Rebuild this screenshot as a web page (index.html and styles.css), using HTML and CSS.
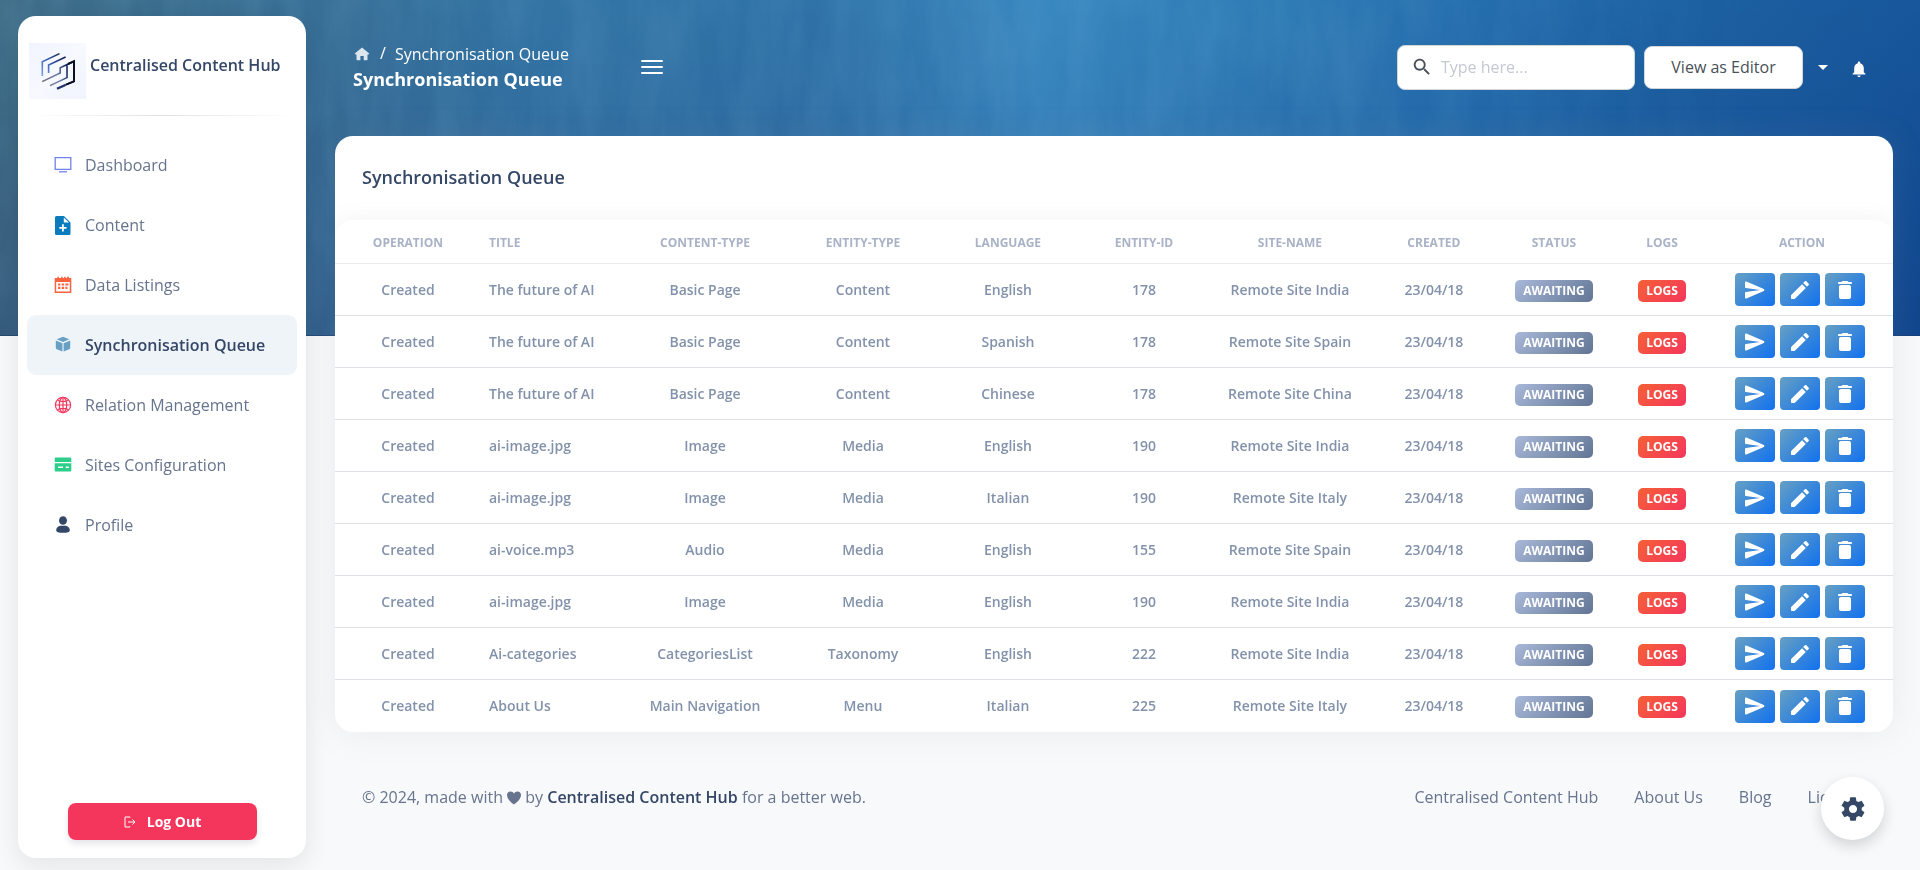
FILE: index.html
```html
<!DOCTYPE html>
<html lang="en">
<head>
<meta charset="utf-8">
<title>Synchronisation Queue</title>
<link rel="stylesheet" href="styles.css">
</head>
<body>
<svg class="sprite" aria-hidden="true">
  <symbol id="send" viewBox="0 0 24 24"><path d="M3.4 20.4l17.45-7.48c.81-.35.81-1.49 0-1.84L3.4 3.6c-.66-.29-1.39.2-1.39.91L2 9.12c0 .5.37.93.87.99L17 12 2.87 13.88c-.5.07-.87.5-.87 1l.01 4.61c0 .71.73 1.2 1.39.91z"/></symbol>
  <symbol id="edit" viewBox="0 0 24 24"><path d="M3 17.46v3.04c0 .28.22.5.5.5h3.04c.13 0 .26-.05.35-.15L17.81 9.94l-3.75-3.75L3.15 17.1c-.1.1-.15.22-.15.36zM20.71 7.04c.39-.39.39-1.02 0-1.41l-2.34-2.34c-.39-.39-1.02-.39-1.41 0l-1.83 1.83 3.75 3.75 1.83-1.83z"/></symbol>
  <symbol id="trash" viewBox="0 0 24 24"><path d="M6 19c0 1.1.9 2 2 2h8c1.1 0 2-.9 2-2V9c0-1.1-.9-2-2-2H8c-1.1 0-2 .9-2 2v10zM18 4h-2.5l-.71-.71c-.18-.18-.44-.29-.7-.29H9.91c-.26 0-.52.11-.7.29L8.5 4H6c-.55 0-1 .45-1 1s.45 1 1 1h12c.55 0 1-.45 1-1s-.45-1-1-1z"/></symbol>
</svg>

<div class="banner">
  <svg class="banner-texture" aria-hidden="true">
    <filter id="streaks" x="0" y="0" width="100%" height="100%"><feTurbulence type="fractalNoise" baseFrequency="0.03 0.008" numOctaves="4" seed="8"/><feColorMatrix values="0 0 0 0 0.3  0 0 0 0 0.62  0 0 0 0 0.82  1.6 0 0 0 -0.5"/></filter>
    <rect width="100%" height="100%" filter="url(#streaks)"/>
  </svg>
</div>

<aside class="sidebar">
  <div class="brand">
    <svg class="brand-logo" viewBox="0 0 57 56" fill="none" stroke-width="1.6" aria-hidden="true">
      <defs>
        <linearGradient id="lg1" gradientUnits="userSpaceOnUse" x1="12" y1="32" x2="36" y2="12"><stop offset="0" stop-color="#7da1e6"/><stop offset=".45" stop-color="#3c5fb5"/><stop offset="1" stop-color="#101a3c"/></linearGradient>
        <linearGradient id="lg2" gradientUnits="userSpaceOnUse" x1="13" y1="38" x2="45" y2="30"><stop offset="0" stop-color="#6d7076"/><stop offset=".5" stop-color="#7180a8"/><stop offset=".8" stop-color="#1c2f70"/><stop offset="1" stop-color="#05070f"/></linearGradient>
        <linearGradient id="lg3" x1="0" y1="0" x2="1" y2="1"><stop offset="0" stop-color="#f0f4ff"/><stop offset=".5" stop-color="#f7f9ff"/><stop offset="1" stop-color="#f1f3fe"/></linearGradient>
      </defs>
      <rect width="57" height="56" fill="url(#lg3)"/>
      <path stroke="url(#lg1)" d="M30.5 10.6 13.3 18.7V33M36.6 14 19.6 22v8"/>
      <path stroke="url(#lg2)" d="M13.2 38.6 31.2 30v-5.3L45 18.3v20L28 45.6M21 42.6l17-8V22"/>
      <path stroke="#0b1020" stroke-width="2" d="M39 21l6-2.7v20l-8 3.4"/>
      <path stroke="#23356d" stroke-width="2.2" d="M36.5 42 28 45.7"/>
    </svg>
    <a class="brand-name" href="#">Centralised Content Hub</a>
  </div>
  <hr class="brand-rule">
  <nav class="menu">
    <a class="menu-item" href="#"><svg class="menu-icon" viewBox="0 0 18 18" aria-hidden="true"><path fill="none" stroke="#6f83ea" stroke-width="1.3" d="M1.2 1.7h15.600v11.600H1.2z"/><path stroke="#6f83ea" stroke-width="1.3" d="M5 15.8h8"/></svg>Dashboard</a>
    <a class="menu-item" href="#"><svg class="menu-icon" viewBox="0 0 18 18" aria-hidden="true"><path fill="#0a7bbd" fill-rule="evenodd" d="M2.5 0H10l6.500 6.500V17.500a1.500 1.500 0 0 1-1.500 1.500H2.500A1.500 1.500 0 0 1 1 17.500V1.500A1.500 1.500 0 0 1 2.500 0zM9.800 1.400v5.200h5.200zM8 8.300v2.700H5.300v1.800H8v2.700h1.800v-2.700h2.700V11H9.800V8.300z"/></svg>Content</a>
    <a class="menu-item" href="#"><svg class="menu-icon" viewBox="0 0 18 18" aria-hidden="true"><path fill="#fb6340" fill-rule="evenodd" d="M.700 2h2.800V.8H5V2h2.200V.8h1.500V2h1.400V.8h1.500V2h1.500V.8H15V2h2.300v15H.700zM2.200 6v9.600h13.600V6zM4 7.500h2.400v2H4zm3.700 0h2.400v2H7.700zm3.700 0h3v2h-3zM4 10.700h2.400v2.200H4zm3.700 0h2.400v2.200H7.700zm3.700 0h2v2.200h-2z"/></svg>Data Listings</a>
    <a class="menu-item active" href="#" aria-current="page"><svg class="menu-icon" viewBox="0 0 18 18" aria-hidden="true"><path fill="#67a0c2" d="M9 .8 15.300 3.300 9 6 2.700 3.300zM1.800 4.500 8.400 7.200V15.600L2.800 13.300Q1.800 12.900 1.800 11.800zM16.200 4.500 9.600 7.200V15.600l5.600-2.300q1-.4 1-1.500z"/></svg>Synchronisation Queue</a>
    <a class="menu-item" href="#"><svg class="menu-icon" viewBox="0 0 18 18" aria-hidden="true"><g fill="none" stroke="#f5365c" stroke-width="1.200"><circle cx="9" cy="9" r="7.600"/><ellipse cx="9" cy="9" rx="3.700" ry="7.600"/><path d="M9 1.600v14.800M1.600 9h14.800M3.500 4.300q5.500 2.600 11 0M3.500 13.700q5.500-2.600 11 0"/></g></svg>Relation Management</a>
    <a class="menu-item" href="#"><svg class="menu-icon" viewBox="0 0 18 18" aria-hidden="true"><path fill="#2dce89" fill-rule="evenodd" d="M1.700 1.500h14.600a1 1 0 0 1 1 1V6H.700V2.500a1 1 0 0 1 1-1zM.700 7.300h16.600v7.200a1 1 0 0 1-1 1H1.700a1 1 0 0 1-1-1zM4 10.500v1.400h5v-1.400zm7.800 0v1.400h3v-1.400z"/></svg>Sites Configuration</a>
    <a class="menu-item" href="#"><svg class="menu-icon" viewBox="0 0 18 18" aria-hidden="true"><g fill="#344767"><ellipse cx="9" cy="4.500" rx="4" ry="4.300"/><path d="M6 9.800h6q3.800 1.200 3.800 4.700Q15.800 16.800 9 16.800T2.200 14.500Q2.200 11 6 9.800z"/></g></svg>Profile</a>
  </nav>
  <button class="logout" type="button"><svg class="logout-icon" viewBox="0 0 12 12" fill="none" stroke="#fff" aria-hidden="true"><path d="M6 1.500V1H1v10h5v-.500M4 6h7M8.500 3.500 11 6 8.500 8.500"/></svg>Log Out</button>
</aside>

<div class="page">
  <header class="topbar">
    <div class="heading">
      <nav class="crumbs" aria-label="Breadcrumb">
        <a href="#" aria-label="Home"><svg class="home" viewBox="0 0 16 14" aria-hidden="true"><path d="M8 .400 15.200 6.600 14.600 7.600H13.500V12.500q0 .800-.800.800H9.700V9H6.400v4.300H3.300q-.800 0-.800-.800V7.600H1.400L.800 6.600z"/></svg></a>
        <span class="slash">/</span>
        <a href="#">Synchronisation Queue</a>
      </nav>
      <h1 class="page-title">Synchronisation Queue</h1>
    </div>
    <button class="burger" type="button" aria-label="Toggle menu"><i></i><i></i><i></i></button>
    <div class="tools">
      <label class="search">
        <svg viewBox="0 0 24 24" aria-hidden="true"><path d="M15.500 14h-.790l-.280-.270C15.410 12.590 16 11.110 16 9.500 16 5.910 13.090 3 9.500 3S3 5.910 3 9.500 5.910 16 9.500 16c1.610 0 3.090-.590 4.230-1.570l.270.280v.790l5 4.990L20.490 19l-4.990-5zm-6 0C7.010 14 5 11.990 5 9.500S7.010 5 9.500 5 14 7.010 14 9.500 11.990 14 9.500 14z"/></svg>
        <input type="text" placeholder="Type here..." aria-label="Search">
      </label>
      <button class="role" type="button">View as Editor</button>
      <button class="bare caret" type="button" aria-label="Choose role"><svg viewBox="0 0 10 5" aria-hidden="true"><path d="M0 0h10L5 5z"/></svg></button>
      <button class="bare bell" type="button" aria-label="Notifications"><svg viewBox="4 2 16 20" aria-hidden="true"><path d="M12 22c1.100 0 2-.900 2-2h-4c0 1.100.890 2 2 2zm6-6v-5c0-3.070-1.640-5.640-4.500-6.320V4c0-.830-.670-1.500-1.500-1.500s-1.500.670-1.500 1.500v.680C7.630 5.360 6 7.920 6 11v5l-2 2v1h16v-1l-2-2z"/></svg></button>
    </div>
  </header>

  <main class="card">
    <h2 class="card-title">Synchronisation Queue</h2>
    <div class="table-wrap">
      <table class="queue">
        <colgroup><col class="c-op"><col class="c-title"><col class="c-ctype"><col class="c-etype"><col class="c-lang"><col class="c-id"><col class="c-site"><col class="c-date"><col class="c-status"><col class="c-logs"><col class="c-action"></colgroup>
        <thead>
          <tr><th>Operation</th><th>Title</th><th>content-type</th><th>entity-type</th><th>language</th><th>entity-id</th><th>site-name</th><th>created</th><th>status</th><th>logs</th><th>action</th></tr>
        </thead>
        <tbody id="queue-rows"></tbody>
      </table>
    </div>
  </main>

  <footer class="footer">
    <p class="credit">© 2024, made with <svg class="heart" viewBox="0 0 14 14" aria-hidden="true"><path d="M7 13.500Q0 8.500 0 4.300 0 .500 3.600.500 6 .500 7 2.500 8 .500 10.400.500 14 .500 14 4.300 14 8.500 7 13.500z"/></svg> by <a class="credit-link" href="#">Centralised Content Hub</a> for a better web.</p>
    <nav class="footer-links"><a href="#">Centralised Content Hub</a><a href="#">About Us</a><a href="#">Blog</a><a href="#">License</a></nav>
  </footer>
</div>

<button class="settings" type="button" aria-label="Settings"><svg viewBox="0 0 24 24" aria-hidden="true"><path d="M19.430 12.980c.040-.320.070-.640.070-.980s-.030-.660-.070-.980l2.110-1.650c.190-.150.240-.420.120-.640l-2-3.460c-.120-.220-.390-.300-.610-.220l-2.490 1c-.520-.400-1.080-.730-1.690-.980l-.380-2.650C14.460 2.180 14.250 2 14 2h-4c-.250 0-.460.180-.490.420l-.380 2.650c-.610.250-1.170.590-1.690.980l-2.490-1c-.230-.090-.490 0-.610.220l-2 3.460c-.130.220-.070.490.120.640l2.110 1.650c-.040.320-.070.650-.070.980s.030.660.070.980l-2.110 1.650c-.190.150-.240.420-.120.640l2 3.460c.120.220.390.300.610.220l2.490-1c.520.400 1.080.730 1.690.980l.380 2.650c.030.240.240.420.490.420h4c.250 0 .460-.180.490-.420l.380-2.650c.610-.250 1.170-.590 1.690-.980l2.490 1c.230.090.490 0 .610-.220l2-3.460c.120-.220.070-.490-.120-.640l-2.110-1.650zM12 15.500c-1.930 0-3.500-1.570-3.500-3.500s1.570-3.500 3.500-3.500 3.500 1.570 3.500 3.500-1.570 3.500-3.500 3.500z"/></svg></button>
<script src="queue.js"></script>
</body>
</html>
```

FILE: styles.css
```css
* { box-sizing: border-box; }
body { margin: 0; min-height: 100vh; background: #f8f9fa; color: #67748e; font: 16px/24px "Open Sans", "Noto Sans", sans-serif; }
a { color: inherit; text-decoration: none; }
button { font: inherit; border: 0; padding: 0; cursor: pointer; }
svg { display: block; }
.sprite { position: absolute; width: 0; height: 0; }

.banner { position: absolute; inset: 0 0 auto; height: 336px; overflow: hidden; border-bottom: 1px solid rgba(20, 40, 90, .5);
  background: linear-gradient(180deg, rgba(50, 125, 165, .2), rgba(20, 50, 110, .25)), linear-gradient(93deg, #41687f 0%, #3a6c92 16%, #3271a4 28%, #2f70a8 42%, #3a8ac6 54%, #2b78b8 66%, #226bb0 76%, #185ba2 86%, #104c98 100%); }
.banner-texture { width: 100%; height: 100%; opacity: .12; -webkit-mask-image: linear-gradient(90deg, #000 70%, transparent 95%); mask-image: linear-gradient(90deg, #000 70%, transparent 95%); }

.sidebar { position: fixed; top: 16px; bottom: 12px; left: 18px; width: 288px; display: flex; flex-direction: column; background: #fff; border-radius: 18px; box-shadow: 0 8px 26px rgba(20, 20, 20, .09); }
.brand { display: flex; gap: 4px; padding: 27px 11px 0; }
.brand-logo { width: 57px; height: 56px; }
.brand-name { padding-top: 10px; font-weight: 600; color: #344767; white-space: nowrap; }
.brand-rule { width: 264px; height: 1px; margin: 16px auto 0; border: 0; background: linear-gradient(90deg, transparent, rgba(0, 0, 0, .12), transparent); }
.menu { display: flex; flex-direction: column; padding: 19px 9px 0; }
.menu-item { display: flex; align-items: center; gap: 13px; height: 60px; padding-left: 27px; border-radius: 9px; white-space: nowrap; }
.menu-item.active { background: #eff4f9; color: #344767; font-weight: 600; }
.menu-icon { width: 18px; height: 18px; overflow: visible; }
.logout { display: flex; align-items: center; justify-content: center; gap: 11px; width: 189px; height: 37px; margin: auto auto 18px 50px; border-radius: 8px; background: #f5365c; color: #fff; font-size: 14px; font-weight: 700; box-shadow: 0 4px 6px rgba(50, 50, 93, .12); }
.logout-icon { width: 12px; height: 12px; }

.page { position: relative; padding: 0 27px 0 335px; }
.topbar { display: flex; align-items: center; height: 136px; padding: 0 27px 2px 18px; color: #fff; }
.heading { width: 288px; padding-bottom: 4px; }
.crumbs { display: flex; align-items: center; }
.home { width: 16px; height: 14px; margin-left: 1px; fill: #dbe6ef; }
.slash { padding: 0 9px 3px 10px; }
.page-title { margin: 0; font-size: 18px; line-height: 22px; font-weight: 700; }
.burger { display: grid; gap: 4px; width: 22px; background: none; }
.burger i { height: 2px; border-radius: 1px; background: #fff; }
.tools { display: flex; align-items: center; margin-left: auto; }
.search { display: flex; align-items: center; gap: 8px; width: 238px; height: 45px; padding: 0 13px; margin-right: 9px; border: 1px solid #d2d6da; border-radius: 8px; background: #fff; }
.search svg { flex: none; width: 22px; height: 22px; fill: #495057; }
.search input { width: 100%; min-width: 0; padding: 0; border: 0; outline: 0; font: inherit; color: #495057; background: none; }
.search input::placeholder { color: #c4c8d2; opacity: 1; }
.role { width: 159px; height: 43px; border: 1px solid #d2d6da; border-radius: 8px; background: #fff; color: #495057; }
.bare { background: none; }
.bare svg { fill: #fff; }
.caret { padding: 0 15px; }
.caret svg { width: 10px; height: 5px; }
.bell { padding: 3px 0 0 9px; }
.bell svg { width: 14px; height: 16px; }

.card { background: #fff; border-radius: 18px; box-shadow: 0 0 32px rgba(136, 152, 170, .15); }
.card-title { margin: 0; padding: 28px 27px 30px; font-size: 18px; line-height: 26px; font-weight: 600; color: #344767; }
.table-wrap { border-radius: 18px; background: #fff; overflow: hidden; box-shadow: 0 -4px 18px rgba(136, 136, 136, .08); clip-path: inset(-30px 0 0 0 round 18px); }
.queue { width: 100%; table-layout: fixed; border-collapse: separate; border-spacing: 0; text-align: center; }
.c-op { width: 9.37%; } .c-title { width: 8.86%; } .c-ctype { width: 11.04%; } .c-etype { width: 9.24%; } .c-lang { width: 9.37%; } .c-id { width: 8.09%; }
.c-site { width: 10.65%; } .c-date { width: 7.83%; } .c-status { width: 7.58%; } .c-logs { width: 6.29%; } .c-action { width: 11.68%; }
.queue th { height: 44px; padding: 2px 8px 0; border-bottom: 1px solid #e9ecef; font-size: 12px; line-height: 20px; font-weight: 700; text-transform: uppercase; color: #a9b2c6; }
.queue td { height: 52px; padding: 0 8px; border-bottom: 1px solid #dee2e6; font-size: 14px; line-height: 20px; font-weight: 600; color: #8392ab; white-space: nowrap; }
.queue tr:last-child td { border-bottom: 0; }
.queue th:nth-child(2), .queue td:nth-child(2) { text-align: left; }
.queue td:nth-child(9), .queue td:nth-child(10) { padding-top: 2px; }
.queue td:last-child { padding-right: 11px; }
.badge { display: inline-block; height: 22px; padding: 0 8px; border-radius: 5px; color: #fff; font-size: 12px; line-height: 22px; font-weight: 700; vertical-align: middle; }
.badge-wait { background: linear-gradient(135deg, #a8b8d8, #627594); }
.badge-logs { background: linear-gradient(135deg, #f56036, #f5365c); }
.actions { display: flex; justify-content: center; gap: 5px; }
.act { display: grid; place-items: center; width: 40px; height: 33px; border-radius: 4px; background: linear-gradient(135deg, #67a0c2, #1171ef); }
.act svg { width: 24px; height: 24px; fill: #fff; }

.footer { display: flex; align-items: center; justify-content: space-between; padding: 53px 30px 40px 27px; }
.credit { margin: 0; }
.heart { display: inline-block; width: 14px; height: 14px; vertical-align: -2px; fill: #67748e; }
.credit-link { font-weight: 600; color: #344767; }
.footer-links { display: flex; gap: 36px; }

.settings { position: fixed; right: 36px; bottom: 30px; display: grid; place-items: center; width: 63px; height: 63px; border-radius: 50%; background: #fff; box-shadow: 0 6px 14px rgba(20, 20, 20, .16); }
.settings svg { width: 28px; height: 28px; fill: #344767; }
```

FILE: queue.js
```js
const rows = [
  ["The future of AI", "Basic Page", "Content", "English", "178", "Remote Site India"],
  ["The future of AI", "Basic Page", "Content", "Spanish", "178", "Remote Site Spain"],
  ["The future of AI", "Basic Page", "Content", "Chinese", "178", "Remote Site China"],
  ["ai-image.jpg", "Image", "Media", "English", "190", "Remote Site India"],
  ["ai-image.jpg", "Image", "Media", "Italian", "190", "Remote Site Italy"],
  ["ai-voice.mp3", "Audio", "Media", "English", "155", "Remote Site Spain"],
  ["ai-image.jpg", "Image", "Media", "English", "190", "Remote Site India"],
  ["Ai-categories", "CategoriesList", "Taxonomy", "English", "222", "Remote Site India"],
  ["About Us", "Main Navigation", "Menu", "Italian", "225", "Remote Site Italy"]
];

const action = (icon, label) =>
  `<button class="act" type="button" aria-label="${label}"><svg aria-hidden="true"><use href="#${icon}"/></svg></button>`;

document.getElementById("queue-rows").innerHTML = rows.map(cells => `
  <tr>
    <td>Created</td>${cells.map(c => `<td>${c}</td>`).join("")}<td>23/04/18</td>
    <td><span class="badge badge-wait">AWAITING</span></td>
    <td><button class="badge badge-logs" type="button">LOGS</button></td>
    <td><div class="actions">${action("send", "Send")}${action("edit", "Edit")}${action("trash", "Delete")}</div></td>
  </tr>`).join("");
```
